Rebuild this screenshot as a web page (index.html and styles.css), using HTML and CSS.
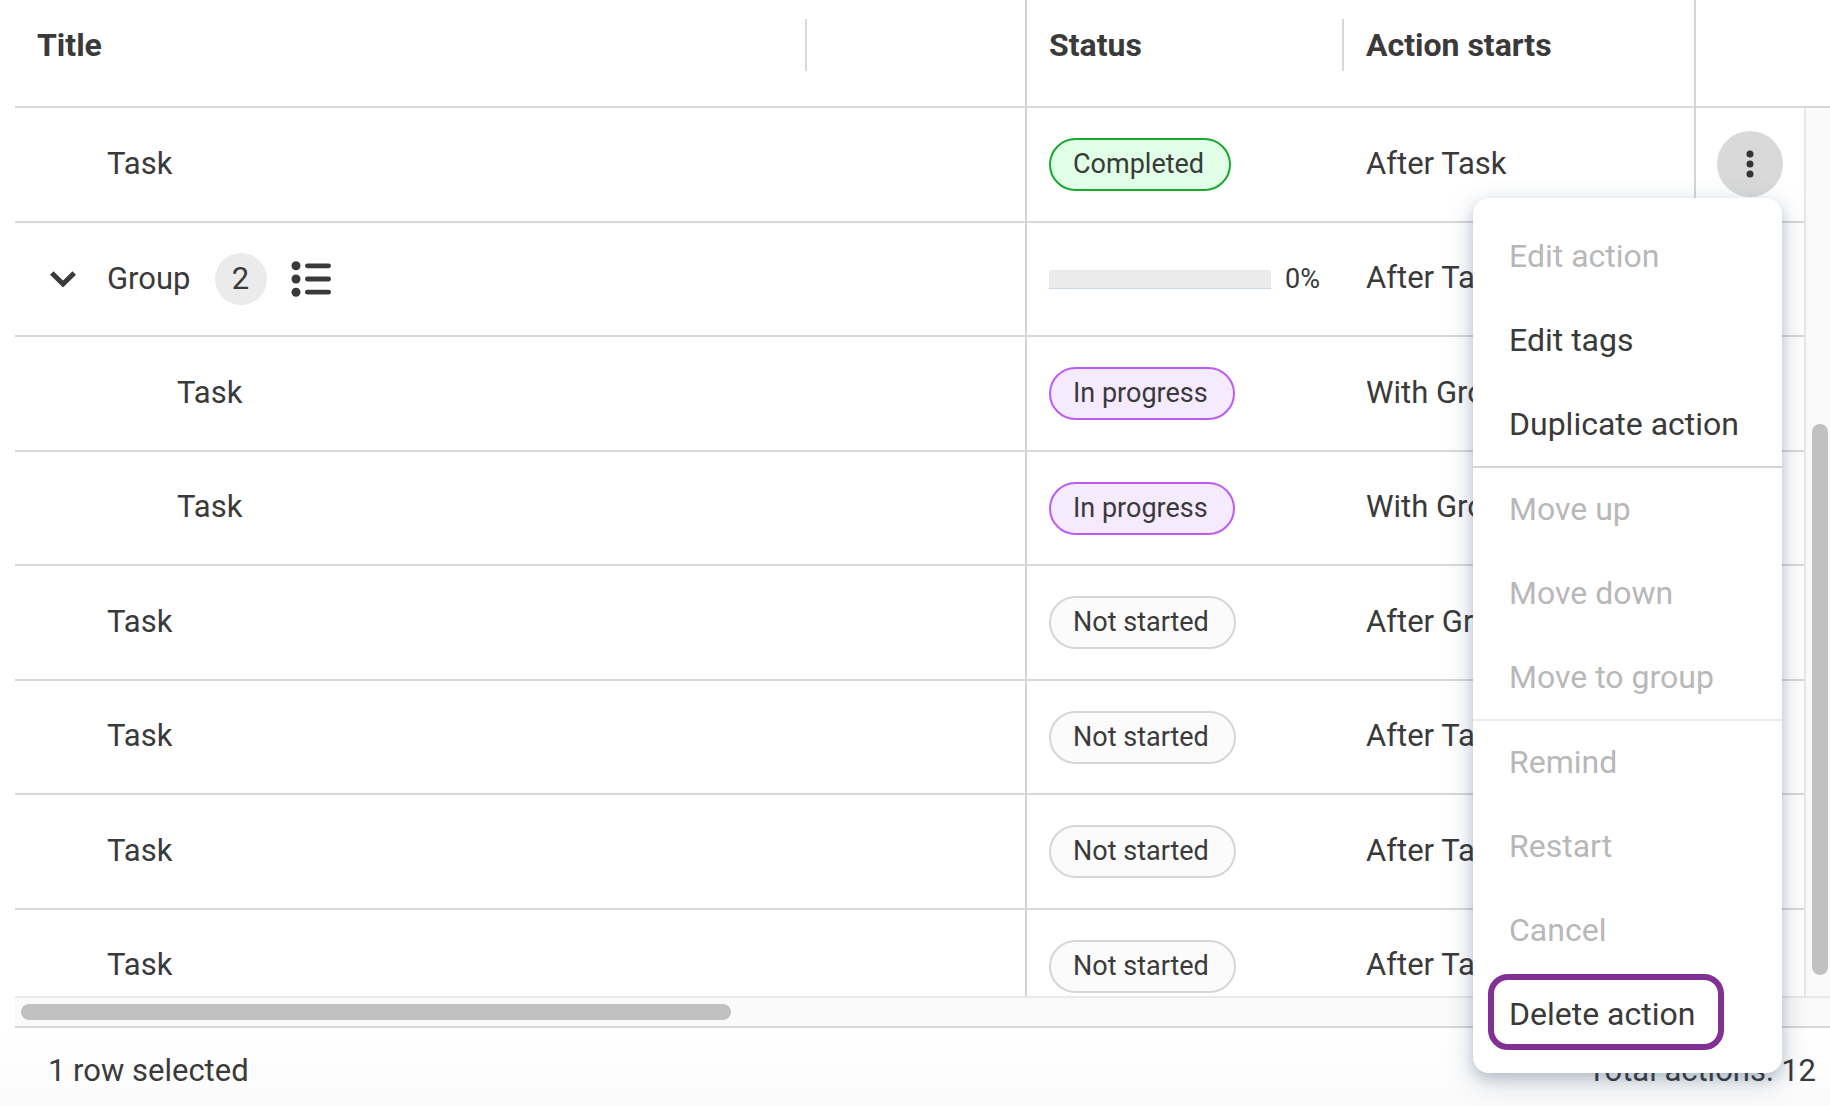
FILE: index.html
```html
<!DOCTYPE html>
<html lang="en">
<head>
    <meta charset="UTF-8">
    <meta name="viewport" content="width=device-width, initial-scale=1.0">
    <title>Actions</title>
    <link rel="stylesheet" href="styles.css">
</head>
<body>

    <div class="page">
        <!-- Actions grid -->
        <div class="grid">
            <table class="actions">
                <thead>
                    <tr>
                        <th class="col-title resizable">Title</th>
                        <th class="col-blank pinned"></th>
                        <th class="col-status resizable">Status</th>
                        <th class="col-starts pinned">Action starts</th>
                        <th class="col-menu"></th>
                    </tr>
                </thead>
                <tbody>
                    <tr>
                        <td class="level-1">Task</td>
                        <td class="pinned"></td>
                        <td class="status"><span class="chip completed">Completed</span></td>
                        <td class="pinned">After Task</td>
                        <td class="menu-cell">
                            <button class="kebab" type="button" aria-label="Row actions">
                                <svg width="66" height="66" viewBox="0 0 66 66" fill="#333">
                                    <circle cx="33" cy="23" r="3.5"/>
                                    <circle cx="33" cy="33" r="3.5"/>
                                    <circle cx="33" cy="43" r="3.5"/>
                                </svg>
                            </button>
                        </td>
                    </tr>
                    <tr>
                        <td class="level-0">
                            <div class="group">
                                <button class="toggle" type="button" aria-label="Collapse group">
                                    <svg width="26" height="16" viewBox="0 0 26 16" fill="none" stroke="#3a3a3a" stroke-width="5">
                                        <path d="M1.8 2L13 13L24.2 2"/>
                                    </svg>
                                </button>
                                <span class="group-name">Group</span>
                                <span class="count">2</span>
                                <svg class="list-icon" width="40" height="36" viewBox="0 0 40 36" fill="#3a3a3a">
                                    <circle cx="5" cy="4.8" r="4.5"/>
                                    <circle cx="5" cy="18" r="4.5"/>
                                    <circle cx="5" cy="31.2" r="4.5"/>
                                    <rect x="14" y="2.4" width="26" height="4.8" rx="2.4"/>
                                    <rect x="14" y="15.6" width="26" height="4.8" rx="2.4"/>
                                    <rect x="14" y="28.8" width="26" height="4.8" rx="2.4"/>
                                </svg>
                            </div>
                        </td>
                        <td class="pinned"></td>
                        <td class="status">
                            <div class="progress">
                                <div class="bar" role="progressbar" aria-valuenow="0" aria-label="Group progress"></div>
                                <span>0%</span>
                            </div>
                        </td>
                        <td class="pinned">After Task</td>
                        <td></td>
                    </tr>
                    <tr>
                        <td class="level-2">Task</td>
                        <td class="pinned"></td>
                        <td class="status"><span class="chip in-progress">In progress</span></td>
                        <td class="pinned">With Group</td>
                        <td></td>
                    </tr>
                    <tr>
                        <td class="level-2">Task</td>
                        <td class="pinned"></td>
                        <td class="status"><span class="chip in-progress">In progress</span></td>
                        <td class="pinned">With Group</td>
                        <td></td>
                    </tr>
                    <tr>
                        <td class="level-1">Task</td>
                        <td class="pinned"></td>
                        <td class="status"><span class="chip">Not started</span></td>
                        <td class="pinned">After Group</td>
                        <td></td>
                    </tr>
                    <tr>
                        <td class="level-1">Task</td>
                        <td class="pinned"></td>
                        <td class="status"><span class="chip">Not started</span></td>
                        <td class="pinned">After Task</td>
                        <td></td>
                    </tr>
                    <tr>
                        <td class="level-1">Task</td>
                        <td class="pinned"></td>
                        <td class="status"><span class="chip">Not started</span></td>
                        <td class="pinned">After Task</td>
                        <td></td>
                    </tr>
                    <tr>
                        <td class="level-1">Task</td>
                        <td class="pinned"></td>
                        <td class="status"><span class="chip">Not started</span></td>
                        <td class="pinned">After Task</td>
                        <td></td>
                    </tr>
                </tbody>
            </table>
            <div class="scroll-side">
                <div class="scroll-head"></div>
                <div class="scroll-y"><div class="thumb-y"></div></div>
            </div>
        </div>
        <div class="scroll-x"><div class="thumb-x"></div></div>

        <div class="footer">
            <span>1 row selected</span>
            <span>Total actions: 12</span>
        </div>
    </div>

    <!-- Row menu -->
    <div class="menu">
        <div class="menu-group">
            <button type="button" disabled>Edit action</button>
            <button type="button">Edit tags</button>
            <button type="button">Duplicate action</button>
        </div>
        <div class="menu-group">
            <button type="button" disabled>Move up</button>
            <button type="button" disabled>Move down</button>
            <button type="button" disabled>Move to group</button>
        </div>
        <div class="menu-group">
            <button type="button" disabled>Remind</button>
            <button type="button" disabled>Restart</button>
            <button type="button" disabled>Cancel</button>
            <button class="highlighted" type="button">Delete action</button>
        </div>
    </div>

</body>
</html>
```
FILE: styles.css
```css
*, *::after {
    box-sizing: border-box;
}
body {
    margin: 0;
    font-family: Roboto, "Liberation Sans", sans-serif;
    font-size: 31px;
    line-height: 40px;
    color: #3a3a3a;
    background: #fff;
}
button {
    font: inherit;
    color: inherit;
    background: none;
    border: none;
    padding: 0;
    cursor: pointer;
}
svg {
    display: block;
}
.page {
    display: flex;
    flex-direction: column;
    height: 100vh;
}

/* Grid */
.grid {
    display: flex;
    flex: 1;
    min-height: 0;
    overflow: hidden;
    margin-left: 15px;
}
.actions {
    flex: 1;
    align-self: flex-start;
    table-layout: fixed;
    border-collapse: separate;
    border-spacing: 0;
}
th, td {
    padding: 0 22px;
    border-bottom: 2px solid #d8d8d8;
    text-align: left;
    white-space: nowrap;
}
th {
    position: relative;
    height: 108px;
    padding-bottom: 16px;
    font-size: 32px;
    font-weight: 700;
}
td {
    height: 115px;
    padding-bottom: 2px;
}
tr:nth-child(even) td {
    height: 114px;
}
.status {
    padding-bottom: 0;
}
.col-blank {
    width: 220px;
}
.col-status {
    width: 317px;
}
.col-starts {
    width: 352px;
}
.col-menu {
    width: 108px;
}
.pinned {
    border-right: 2px solid #d4d4d4;
}
.resizable::after {
    content: "";
    position: absolute;
    top: 19px;
    right: 0;
    width: 2px;
    height: 52px;
    background: #d8d8d8;
}
.level-0 {
    padding-left: 35px;
    padding-bottom: 0;
}
.level-1 {
    padding-left: 92px;
}
.level-2 {
    padding-left: 162px;
}

/* Group row */
.group {
    display: flex;
    align-items: center;
}
.toggle {
    width: 57px;
}
.count {
    width: 52px;
    height: 52px;
    margin: 0 24px;
    border-radius: 50%;
    background: #ebebeb;
    line-height: 52px;
    text-align: center;
}
.progress {
    display: flex;
    align-items: center;
    gap: 14px;
    font-size: 27px;
}
.bar {
    width: 222px;
    height: 19px;
    background: #ebebeb;
    border-bottom: 1px solid #c4daf3;
}

/* Status chips */
.chip {
    display: inline-block;
    padding: 0 25px 0 22px;
    border: 2px solid #d6d6d6;
    border-radius: 27px;
    background: #fbfbfb;
    font-size: 27px;
    line-height: 49px;
    vertical-align: middle;
}
.completed {
    border-color: #17a82f;
    background: #e0ffe6;
}
.in-progress {
    border-color: #bd5cf5;
    background: #f6eaff;
}
.menu-cell {
    padding: 0 21px 2px;
}
.kebab {
    display: block;
    width: 66px;
    height: 66px;
    border-radius: 50%;
    background: #d9d9d9;
}

/* Scrollbars */
.scroll-side {
    display: flex;
    flex-direction: column;
    width: 26px;
}
.scroll-head {
    height: 108px;
    border-bottom: 2px solid #d8d8d8;
}
.scroll-y {
    flex: 1;
    padding: 316px 2px 21px 6px;
    border-left: 2px solid #e8e8e8;
    background: #fafafa;
}
.thumb-y {
    height: 100%;
    border-radius: 8px;
    background: #c1c1c1;
}
.scroll-x {
    height: 32px;
    margin-left: 15px;
    padding: 6px;
    border-top: 2px solid #e8e8e8;
    border-bottom: 2px solid #d6d6d6;
    background: #fafafa;
}
.thumb-x {
    width: 39.4%;
    height: 16px;
    border-radius: 8px;
    background: #c1c1c1;
}
.footer {
    display: flex;
    justify-content: space-between;
    height: 78px;
    padding: 23px 14px 0 48px;
    background: linear-gradient(#fff, #fbfbfb);
}

/* Menu */
.menu {
    position: absolute;
    top: 198px;
    right: 48px;
    padding: 17px 0 16px;
    border-radius: 16px;
    background: #fff;
    font-size: 32px;
    box-shadow: 0 8px 28px rgba(40, 70, 120, 0.25), 0 6px 12px rgba(40, 60, 90, 0.16);
}
.menu-group + .menu-group {
    margin-top: -1px;
    border-top: 2px solid #ececec;
}
.menu-group:nth-child(2) {
    border-color: #d4d4d4;
}
.menu button {
    position: relative;
    display: block;
    width: 309px;
    height: 84px;
    padding: 0 0 3px 36px;
    text-align: left;
}
.menu button:disabled {
    color: #b8b8b8;
    cursor: default;
}
.highlighted::after {
    content: "";
    position: absolute;
    top: 1px;
    left: 15px;
    width: 236px;
    height: 76px;
    border: 6px solid #813094;
    border-radius: 20px;
}
```
